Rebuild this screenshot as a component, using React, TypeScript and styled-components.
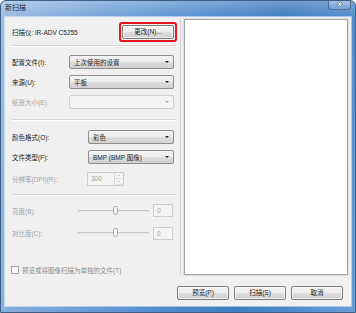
import React, { FC } from "react";
import styled, { createGlobalStyle } from "styled-components";

const FONT = `"Liberation Sans", "Noto Sans CJK SC", sans-serif`;

const GlobalStyle = createGlobalStyle`
  html, body {
    margin: 0;
    padding: 0;
    background: #ffffff;
  }
`;

type SelectProps = {
    value?: string
    width: number
    disabled?: boolean
};

const Select: FC<SelectProps> = (props) => (
    <SelectBox $width={props.width} $disabled={props.disabled}>
        <SelectText>{props.value}</SelectText>
        <Arrow $disabled={props.disabled}/>
    </SelectBox>
);

type FieldProps = {
    label: string
    labelWidth: number
    disabled?: boolean
    top: number
    children: React.ReactNode
};

const Field: FC<FieldProps> = (props) => (
    <Row $top={props.top}>
        <Label $width={props.labelWidth} $disabled={props.disabled}>{props.label}</Label>
        {props.children}
    </Row>
);

const SliderField: FC<{ label: string, top: number }> = (props) => (
    <Row $top={props.top}>
        <Label $width={66} $disabled>{props.label}</Label>
        <Track>
            <Thumb/>
        </Track>
        <ValueBox>0</ValueBox>
    </Row>
);

export default function App() {
    return (
        <>
            <GlobalStyle/>
            <Window>
                <TitleBar>
                    <Title>新扫描</Title>
                    <CloseButton>x</CloseButton>
                </TitleBar>
                <Client>
                    <Main>
                        <LeftPanel>
                            <ScannerRow>
                                <Label $width={100}>扫描仪: iR-ADV C5255</Label>
                                <Highlight>
                                    <Button $width={52}>更改(N)...</Button>
                                </Highlight>
                            </ScannerRow>
                            <Separator/>
                            <Field label="配置文件(I):" labelWidth={57} top={8}>
                                <Select value="上次使用的设置" width={105}/>
                            </Field>
                            <Field label="来源(U):" labelWidth={57} top={6}>
                                <Select value="平板" width={105}/>
                            </Field>
                            <Field label="纸张大小(E):" labelWidth={57} top={6} disabled>
                                <Select width={105} disabled/>
                            </Field>
                            <Separator $top={10}/>
                            <Field label="颜色格式(O):" labelWidth={76} top={9}>
                                <Select value="彩色" width={86}/>
                            </Field>
                            <Field label="文件类型(F):" labelWidth={76} top={6}>
                                <Select value="BMP (BMP 图像)" width={86}/>
                            </Field>
                            <Field label="分辨率(DPI)(R):" labelWidth={75} top={8} disabled>
                                <Spin>
                                    <SpinText>300</SpinText>
                                    <SpinButtons>
                                        <SpinBtn><SpinArrow $up/></SpinBtn>
                                        <SpinBtn><SpinArrow/></SpinBtn>
                                    </SpinButtons>
                                </Spin>
                            </Field>
                            <Separator $top={8}/>
                            <SliderField label="亮度(B):" top={8}/>
                            <SliderField label="对比度(C):" top={9}/>
                            <CheckRow>
                                <CheckBox/>
                                <CheckLabel>预览或将图像扫描为单独的文件(T)</CheckLabel>
                            </CheckRow>
                        </LeftPanel>
                        <Preview/>
                    </Main>
                    <ButtonRow>
                        <Button $width={52}>预览(P)</Button>
                        <Button $width={52}>扫描(S)</Button>
                        <Button $width={52}>取消</Button>
                    </ButtonRow>
                </Client>
            </Window>
        </>
    );
}

const Window = styled.div`
  width: 356px;
  height: 313px;
  box-sizing: border-box;
  display: flex;
  flex-direction: column;
  font-family: ${FONT};
  border: 1px solid #3d5f86;
  border-radius: 6px 6px 0 0;
  overflow: hidden;
  background:
    linear-gradient(180deg, rgba(255, 255, 255, 0.25) 0px, rgba(255, 255, 255, 0) 16px),
    linear-gradient(100deg, #9cbde2 0%, #7ea9da 20%, #5b93d0 45%, #3f7cc2 70%, #4f8acb 85%, #6aa0d8 100%);
`;

const TitleBar = styled.div`
  height: 16px;
  display: flex;
  justify-content: space-between;
  align-items: flex-start;
  padding-left: 4px;
  padding-right: 4px;
`;

const Title = styled.span`
  font-size: 7px;
  line-height: 14px;
  color: #1b2a3c;
`;

const CloseButton = styled.div`
  width: 23px;
  height: 10px;
  margin-top: -1px;
  box-sizing: border-box;
  border: 1px solid rgba(30, 55, 90, 0.55);
  border-top: none;
  border-radius: 0 0 3px 3px;
  background: linear-gradient(180deg, rgba(255, 255, 255, 0.35), rgba(255, 255, 255, 0.08));
  color: #ffffff;
  font-family: "DejaVu Sans", sans-serif;
  font-weight: bold;
  font-size: 7px;
  line-height: 8px;
  text-align: center;
  text-shadow: 0 0 1px #1b2a3c, 0 0 1px #1b2a3c;
`;

const Client = styled.div`
  flex: 1;
  margin: 0 4px 6px 4px;
  background: #f0f0f0;
  display: flex;
  flex-direction: column;
  padding-top: 2px;
  box-shadow: 0 0 0 1px rgba(255, 255, 255, 0.5);
`;

const Main = styled.div`
  display: flex;
  height: 256px;
`;

const LeftPanel = styled.div`
  width: 175px;
  border-right: 1px solid #d2d2d2;
  padding-top: 3px;
  display: flex;
  flex-direction: column;
`;

const ScannerRow = styled.div`
  height: 19px;
  display: flex;
  align-items: center;
  justify-content: space-between;
  padding-left: 7px;
  padding-right: 3px;
`;

const Highlight = styled.div`
  border: 2px solid #e3161d;
  border-radius: 3px;
  padding: 1px;
  display: flex;
`;

const Separator = styled.div<{ $top?: number }>`
  height: 0;
  margin: ${p => p.$top ?? 4}px 4px 0 7px;
  border-top: 1px solid #d5d5d5;
  border-bottom: 1px solid #ffffff;
`;

const Row = styled.div<{ $top: number }>`
  height: 14px;
  margin-top: ${p => p.$top}px;
  display: flex;
  align-items: center;
  padding-left: 7px;
`;

const Label = styled.span<{ $width: number, $disabled?: boolean }>`
  width: ${p => p.$width}px;
  flex-shrink: 0;
  font-size: 6.5px;
  white-space: nowrap;
  color: ${p => p.$disabled ? "#a3a3a3" : "#1e1e1e"};
`;

const SelectBox = styled.div<{ $width: number, $disabled?: boolean }>`
  width: ${p => p.$width}px;
  height: 14px;
  box-sizing: border-box;
  display: flex;
  align-items: center;
  justify-content: space-between;
  padding: 0 4px 0 4px;
  border: 1px solid ${p => p.$disabled ? "#cfcfcf" : "#8d8d8d"};
  border-radius: 2px;
  background: ${p => p.$disabled
    ? "#f4f4f4"
    : "linear-gradient(180deg, #f4f4f4 0%, #ececec 48%, #dddddd 52%, #d0d0d0 100%)"};
`;

const SelectText = styled.span`
  font-size: 6.5px;
  color: #1e1e1e;
  white-space: nowrap;
`;

const Arrow = styled.span<{ $disabled?: boolean }>`
  width: 0;
  height: 0;
  border-left: 2px solid transparent;
  border-right: 2px solid transparent;
  border-top: 2px solid ${p => p.$disabled ? "#a8a8a8" : "#1e1e1e"};
`;

const Spin = styled.div`
  width: 37px;
  height: 14px;
  box-sizing: border-box;
  display: flex;
  border: 1px solid #cdcdcd;
  background: #f4f4f4;
`;

const SpinText = styled.span`
  flex: 1;
  font-size: 6.5px;
  line-height: 12px;
  padding-left: 3px;
  color: #a3a3a3;
`;

const SpinButtons = styled.div`
  width: 8px;
  display: flex;
  flex-direction: column;
  border-left: 1px solid #dadada;
`;

const SpinBtn = styled.div`
  flex: 1;
  display: flex;
  align-items: center;
  justify-content: center;
  border-bottom: 1px solid #e2e2e2;
`;

const SpinArrow = styled.span<{ $up?: boolean }>`
  width: 0;
  height: 0;
  border-left: 1.5px solid transparent;
  border-right: 1.5px solid transparent;
  ${p => p.$up ? "border-bottom" : "border-top"}: 1.5px solid #b0b0b0;
`;

const Track = styled.div`
  width: 71px;
  height: 2px;
  box-sizing: border-box;
  border: 1px solid #c6c6c6;
  border-bottom-color: #e8e8e8;
  position: relative;
  display: flex;
  align-items: center;
  justify-content: center;
`;

const Thumb = styled.div`
  position: absolute;
  left: 34px;
  top: -5px;
  width: 5px;
  height: 9px;
  box-sizing: border-box;
  border: 1px solid #a9a9a9;
  border-radius: 2px 2px 3px 3px;
  background: #f6f6f6;
`;

const ValueBox = styled.div`
  width: 20px;
  height: 13px;
  box-sizing: border-box;
  margin-left: 4px;
  border: 1px solid #cdcdcd;
  background: #f4f4f4;
  font-size: 6.5px;
  line-height: 11px;
  padding-left: 3px;
  color: #a3a3a3;
`;

const CheckRow = styled.div`
  margin-top: 25px;
  display: flex;
  align-items: center;
  padding-left: 6px;
  gap: 3px;
`;

const CheckBox = styled.div`
  width: 6px;
  height: 6px;
  border: 1px solid #a3a3a3;
  background: #ffffff;
`;

const CheckLabel = styled.span`
  font-size: 6.5px;
  color: #8c8c8c;
  white-space: nowrap;
`;

const Preview = styled.div`
  flex: 1;
  margin-left: 3px;
  margin-right: 3px;
  box-sizing: border-box;
  background: #ffffff;
  border: 1px solid #a4a4a4;
  box-shadow: 0 0 0 1px #dedede;
`;

const ButtonRow = styled.div`
  margin-top: 11px;
  display: flex;
  justify-content: flex-end;
  gap: 5px;
  padding-right: 8px;
`;

const Button = styled.div<{ $width: number }>`
  width: ${p => p.$width}px;
  height: 14px;
  box-sizing: border-box;
  border: 1px solid #7c7c7c;
  border-radius: 2px;
  background: linear-gradient(180deg, #f4f4f4 0%, #ececec 48%, #dddddd 52%, #d0d0d0 100%);
  box-shadow: inset 0 0 0 1px rgba(255, 255, 255, 0.6);
  font-size: 6.5px;
  line-height: 12px;
  text-align: center;
  color: #1e1e1e;
  white-space: nowrap;
`;
